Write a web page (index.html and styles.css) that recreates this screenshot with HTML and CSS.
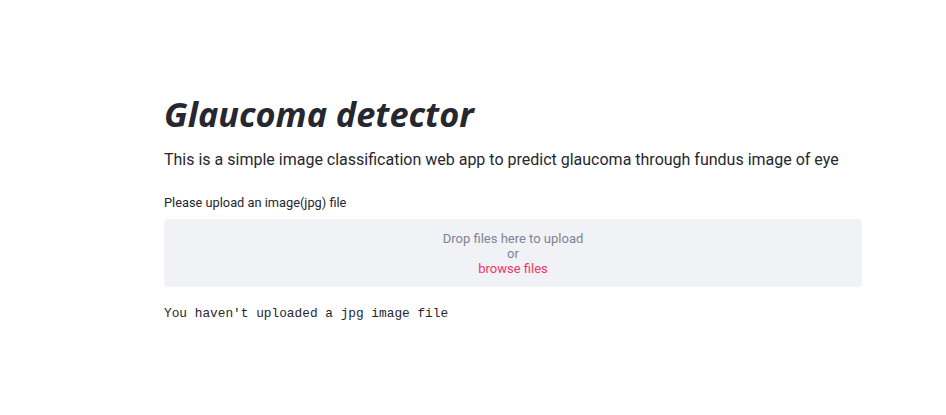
FILE: index.html
```html
<!DOCTYPE html>
<html lang="en">
<head>
<meta charset="utf-8">
<title>Glaucoma detector</title>
<link rel="stylesheet" href="styles.css">
</head>
<body>
<main class="main">
  <h1 class="title">Glaucoma detector</h1>
  <p class="intro">This is a simple image classification web app to predict glaucoma through fundus image of eye</p>
  <div class="uploader">
    <label class="uploader-label">Please upload an image(jpg) file</label>
    <div class="dropzone">
      <span class="drop-text">Drop files here to upload</span>
      <span class="drop-text">or</span>
      <span class="browse">browse files</span>
    </div>
  </div>
  <pre class="notice">You haven't uploaded a jpg image file</pre>
</main>
</body>
</html>
```

FILE: styles.css
```css
html, body {
  margin: 0;
  padding: 0;
  background: #ffffff;
}
body {
  font-family: Roboto, "Noto Sans", sans-serif;
  color: #262730;
}
.main {
  width: 698px;
  margin-left: 164px;
  padding-top: 92px;
  display: flex;
  flex-direction: column;
}
.title {
  margin: 0;
  font-family: "Noto Sans", sans-serif;
  font-size: 34.3px;
  font-weight: 700;
  font-style: italic;
  line-height: 44px;
  color: #262730;
}
.intro {
  margin: 12px 0 0;
  font-size: 16px;
  line-height: 24px;
  white-space: nowrap;
  color: #262730;
}
.uploader {
  margin-top: 22px;
  display: flex;
  flex-direction: column;
}
.uploader-label {
  font-size: 12.8px;
  line-height: 18px;
  color: #262730;
  margin-bottom: 7px;
}
.dropzone {
  height: 68px;
  background: #f0f2f6;
  border-radius: 4px;
  display: flex;
  flex-direction: column;
  align-items: center;
  justify-content: center;
  font-size: 13px;
  line-height: 15px;
}
.drop-text {
  color: #808495;
}
.browse {
  color: #f63366;
}
.notice {
  margin: 18px 0 0;
  font-family: "Liberation Mono", "DejaVu Sans Mono", monospace;
  font-size: 12.8px;
  line-height: 18px;
  color: #262730;
}
```
